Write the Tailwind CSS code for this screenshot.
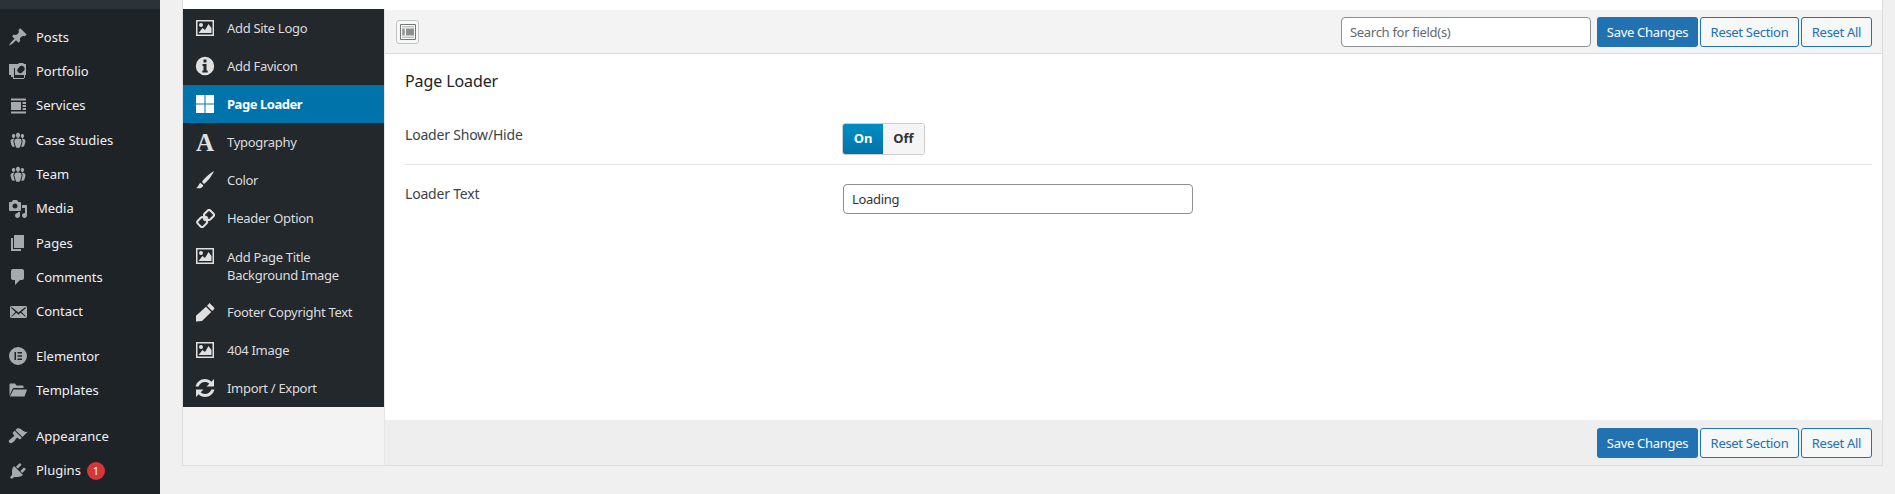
<!DOCTYPE html>
<html lang="en">
<head>
<meta charset="utf-8">
<title>Page Loader</title>
<script src="https://cdn.jsdelivr.net/npm/@tailwindcss/browser@4"></script>
</head>
<body class="bg-[#f0f0f1] font-['Noto_Sans','Open_Sans',sans-serif] text-[13px] tracking-[-0.3px]">
<div class="flex h-[494px] w-[1895px] overflow-hidden">
  <aside class="w-[160px] shrink-0 bg-[#1d2327] tracking-normal text-[#f0f0f1]">
    <div class="h-[9px] bg-[#2c3338]"></div>
    <ul class="pt-[11px] [&>li>span:nth-child(2)]:pt-[1px]">
      <li class="flex h-[34.3px] items-center"><span class="flex w-[36px] justify-center pl-[0px]"><svg class="size-5 fill-[#a7aaad]" viewBox="0 0 20 20"><path d="M10.44 3.02l1.82-1.82 6.36 6.35-1.83 1.82c-1.05-.68-2.48-.57-3.41.36l-.75.75c-.92.93-1.04 2.35-.35 3.41l-1.83 1.82-2.41-2.41-2.8 2.79c-.42.42-3.38 2.71-3.8 2.29s1.86-3.39 2.28-3.81l2.79-2.79L4.1 9.36l1.83-1.82c1.05.69 2.48.57 3.4-.36l.75-.75c.93-.92 1.05-2.35.36-3.41z"/></svg></span><span>Posts</span></li>
      <li class="flex h-[34.3px] items-center"><span class="flex w-[36px] justify-center"><svg class="size-5 fill-[#a7aaad]" viewBox="0 0 20 20"><path fill-rule="evenodd" d="M1 3h9l1-1h4l1 1h2v11h-2v4H5v-2H3v-2H1zM6 7v10h11v-3H7V7zM11 6.500a3 3 0 1 0 4 4a3 3 0 1 0-4-4z"/></svg></span><span>Portfolio</span></li>
      <li class="flex h-[34.3px] items-center"><span class="flex w-[36px] justify-center"><svg class="size-5 fill-[#a7aaad]" viewBox="0 0 20 20"><path d="M3 2.500h15v2H3zM3 6h10v8H3zM14.500 6H18v2h-3.500zM14.500 9H18v2h-3.500zM14.500 12H18v2h-3.500zM3 15.500h15v2H3z"/></svg></span><span>Services</span></li>
      <li class="flex h-[34.3px] items-center"><span class="flex w-[36px] justify-center"><svg class="size-5 fill-[#a7aaad]" viewBox="0 0 20 20"><path d="M8.030 4.460c-.29 1.280.55 3.460 1.970 3.460 1.410 0 2.250-2.180 1.960-3.460-.22-.98-1.080-1.630-1.960-1.630-.89 0-1.740.65-1.970 1.630zm-4.130.9c-.25 1.080.47 2.930 1.670 2.930s1.920-1.850 1.670-2.930c-.19-.83-.92-1.390-1.670-1.390s-1.480.56-1.670 1.390zm8.860 0c-.25 1.080.47 2.930 1.660 2.930 1.200 0 1.920-1.850 1.670-2.930-.19-.83-.92-1.390-1.670-1.390-.74 0-1.470.56-1.660 1.390zm-.59 11.430l1.250-4.300C14.200 10 12.710 8.470 10 8.470c-2.720 0-4.210 1.530-3.440 4.020l1.260 4.300C8.050 17.510 9 18 10 18c.98 0 1.940-.49 2.170-1.210zm-6.100-7.630c-.49.67-.96 1.830-.42 3.590l1.120 3.790c-.34.2-.77.31-1.200.31-.85 0-1.650-.41-1.850-1.030l-1.070-3.650c-.65-2.110.61-3.400 2.920-3.400.27 0 .54.02.79.06-.1.1-.2.22-.29.33zm8.350-.39c2.310 0 3.580 1.290 2.920 3.400l-1.070 3.650c-.2.62-1 1.030-1.850 1.030-.43 0-.86-.11-1.200-.31l1.110-3.770c.55-1.780.08-2.940-.42-3.610-.08-.11-.18-.23-.28-.33.25-.04.51-.06.79-.06z"/></svg></span><span>Case Studies</span></li>
      <li class="flex h-[34.3px] items-center"><span class="flex w-[36px] justify-center"><svg class="size-5 fill-[#a7aaad]" viewBox="0 0 20 20"><path d="M8.030 4.460c-.29 1.280.55 3.460 1.970 3.460 1.410 0 2.250-2.180 1.960-3.460-.22-.98-1.080-1.630-1.960-1.630-.89 0-1.740.65-1.970 1.630zm-4.130.9c-.25 1.080.47 2.930 1.670 2.930s1.920-1.850 1.670-2.930c-.19-.83-.92-1.390-1.670-1.390s-1.480.56-1.670 1.390zm8.860 0c-.25 1.080.47 2.930 1.660 2.930 1.200 0 1.920-1.850 1.670-2.930-.19-.83-.92-1.390-1.670-1.390-.74 0-1.470.56-1.660 1.390zm-.59 11.430l1.250-4.300C14.200 10 12.710 8.470 10 8.470c-2.720 0-4.210 1.530-3.440 4.020l1.260 4.300C8.050 17.510 9 18 10 18c.98 0 1.940-.49 2.170-1.210zm-6.100-7.630c-.49.67-.96 1.830-.42 3.590l1.120 3.790c-.34.2-.77.31-1.200.31-.85 0-1.650-.41-1.850-1.030l-1.070-3.650c-.65-2.110.61-3.400 2.920-3.400.27 0 .54.02.79.06-.1.1-.2.22-.29.33zm8.350-.39c2.310 0 3.580 1.290 2.920 3.400l-1.070 3.650c-.2.62-1 1.030-1.850 1.030-.43 0-.86-.11-1.200-.31l1.110-3.770c.55-1.780.08-2.940-.42-3.610-.08-.11-.18-.23-.28-.33.25-.04.51-.06.79-.06z"/></svg></span><span>Team</span></li>
      <li class="flex h-[34.3px] items-center"><span class="flex w-[36px] justify-center"><svg class="size-5 fill-[#a7aaad]" viewBox="0 0 20 20"><path d="M13 11V4c0-.55-.45-1-1-1h-1.670L9 1H5L3.670 3H2c-.55 0-1 .45-1 1v7c0 .55.45 1 1 1h10c.55 0 1-.45 1-1zM7 4.500c1.380 0 2.500 1.120 2.500 2.500S8.380 9.500 7 9.500 4.500 8.380 4.500 7 5.620 4.500 7 4.500zM14 6h5v10.500c0 1.380-1.120 2.500-2.500 2.500S14 17.880 14 16.500s1.120-2.500 2.500-2.500c.17 0 .34.02.5.05V9h-3V6zm-4 8.050V13h2v3.500c0 1.380-1.120 2.500-2.500 2.500S7 17.880 7 16.500 8.120 14 9.500 14c.17 0 .34.02.5.05z"/></svg></span><span>Media</span></li>
      <li class="flex h-[34.3px] items-center"><span class="flex w-[36px] justify-center"><svg class="size-5 fill-[#a7aaad]" viewBox="0 0 20 20"><path d="M6 15V2h10v13H6zm-1 1h8v2H3V5h2v11z"/></svg></span><span>Pages</span></li>
      <li class="flex h-[34.3px] items-center"><span class="flex w-[36px] justify-center"><svg class="size-5 fill-[#a7aaad]" viewBox="0 0 20 20"><path d="M5 2h9c1.100 0 2 .9 2 2v7c0 1.100-.9 2-2 2h-2l-5 5v-5H5c-1.100 0-2-.9-2-2V4c0-1.100.9-2 2-2z"/></svg></span><span>Comments</span></li>
      <li class="flex h-[34.3px] items-center"><span class="flex w-[36px] justify-center"><svg class="size-5 fill-[#a7aaad]" viewBox="0 0 20 20"><path d="M19 14.500v-9c0-.83-.67-1.500-1.500-1.500H3.490c-.83 0-1.500.67-1.500 1.500v9c0 .83.67 1.500 1.500 1.500H17.500c.83 0 1.500-.67 1.500-1.500zm-1.310-9.110c.33.33.15.67-.03.84L13.600 9.950l3.900 4.060c.12.14.2.36.06.51-.13.16-.43.15-.56.05l-4.370-3.730-2.140 1.950-2.130-1.950-4.370 3.730c-.13.1-.43.11-.56-.05-.14-.15-.06-.37.06-.51l3.900-4.060-4.060-3.720c-.18-.17-.36-.51-.03-.84s.67-.17.95.07l6.240 5.040 6.250-5.040c.28-.24.62-.4.95-.07z"/></svg></span><span>Contact</span></li>
      <li class="mt-[10px] flex h-[34.3px] items-center"><span class="flex w-[36px] justify-center"><svg class="size-5 fill-[#a7aaad]" viewBox="0 0 20 20"><path fill-rule="evenodd" d="M10 1a9 9 0 1 0 0 18a9 9 0 1 0 0-18zM6.500 6h1.500v8H6.500zM9.500 6h4.500v1.500H9.500zM9.500 9.250h4.500v1.500H9.500zM9.500 12.500h4.500V14H9.500z"/></svg></span><span>Elementor</span></li>
      <li class="flex h-[34.3px] items-center"><span class="flex w-[36px] justify-center"><svg class="size-5 fill-[#a7aaad]" viewBox="0 0 20 20"><path d="M1.500 15.500V4.500c0-.5.4-1 1-1h4.500l1.500 2h6c.5 0 1 .4 1 1V8H6c-.7 0-1.200.4-1.500 1zM5.500 9.500h13.500l-2.500 7H1.800z"/></svg></span><span>Templates</span></li>
      <li class="mt-[12px] flex h-[34.3px] items-center"><span class="flex w-[36px] justify-center"><svg class="size-5 fill-[#a7aaad]" viewBox="0 0 20 20"><path d="M14.480 11.060L7.410 3.990l1.500-1.500c.5-.56 2.300-.47 3.510.32 1.210.8 1.430 1.280 2.910 2.100 1.180.64 2.450 1.260 4.450.85zm-.71.71L6.700 4.700 4.930 6.470c-.39.39-.39 1.020 0 1.410l1.060 1.060c.39.39.39 1.030 0 1.420-.6.6-1.430 1.110-2.210 1.690-.35.26-.7.53-1.010.84C1.430 13.230 0 15.190 1.410 16.600c1.400 1.400 3.370-.02 4.720-1.340.32-.31.59-.66.85-1.010.58-.79 1.090-1.610 1.690-2.210.39-.39 1.020-.39 1.410 0l1.060 1.060c.39.39 1.020.39 1.410 0z"/></svg></span><span>Appearance</span></li>
      <li class="flex h-[34.3px] items-center"><span class="flex w-[36px] justify-center"><svg class="size-5 fill-[#a7aaad]" viewBox="0 0 20 20"><path d="M13.110 4.360L9.870 7.600 8 5.730l3.240-3.240c.35-.34 1.050-.2 1.560.32.52.51.66 1.210.31 1.550zm-8 1.770l.91-1.120 9.010 9.010-1.190.84c-.71.71-2.630 1.160-3.820 1.160H6.140L4.900 17.260c-.59.59-1.540.59-2.120 0-.59-.58-.59-1.530 0-2.120l1.240-1.240v-3.880c0-1.130.4-3.190 1.090-3.890zm7.260 3.970l3.240-3.240c.34-.35 1.040-.21 1.550.31.52.51.66 1.210.31 1.550l-3.240 3.250z"/></svg></span><span>Plugins</span><span class="ml-[6px] flex size-[18px] items-center justify-center rounded-full bg-[#d63638] text-[11px] leading-none text-white">1</span></li>
    </ul>
  </aside>

  <div class="ml-[22px] flex h-[466px] w-[1701px] shrink-0 flex-col border-x border-b border-[#dcdcde] bg-white">
    <div class="h-[9px] shrink-0 bg-white"></div>
    <div class="flex min-h-0 flex-1">
      <nav class="flex w-[202px] shrink-0 flex-col border-r border-[#e5e5e5] bg-[#f3f3f3]">
        <ul class="bg-[#23282d] text-[#dddddd] [&>li>span:nth-child(2)]:pt-[1px]">
          <li class="flex h-[38px] items-center"><span class="flex w-[44px] justify-center"><svg class="size-[20px] fill-[#e0e0e0]" viewBox="0 0 20 20"><path fill-rule="evenodd" d="M1 2h18v16H1zM2.500 3.500v13h15v-13zM3.500 15l4-5 2.500 2 3.500-6 3 4v5zM6 5a2 2 0 1 0 0 4a2 2 0 1 0 0-4z"/></svg></span><span>Add Site Logo</span></li>
          <li class="flex h-[38px] items-center"><span class="flex w-[44px] justify-center"><svg class="size-[20px] fill-[#e0e0e0]" viewBox="0 0 20 20"><path fill-rule="evenodd" d="M10 .8a9.200 9.200 0 1 0 0 18.400a9.200 9.200 0 1 0 0-18.400zM8.500 3.500h3v3h-3zM7.500 8h4v6.500h1.200v2H7.300v-2h1.200v-4.500h-1z"/></svg></span><span>Add Favicon</span></li>
          <li class="flex h-[38px] items-center bg-[#0073aa] font-bold tracking-[-0.45px] text-white"><span class="flex w-[44px] justify-center"><svg class="size-[20px] fill-white" viewBox="0 0 20 20"><path d="M1 1h8.500v8.500H1zM10.500 1H19v8.500h-8.500zM1 10.500h8.500V19H1zM10.500 10.500H19V19h-8.500z"/></svg></span><span>Page Loader</span></li>
          <li class="flex h-[38px] items-center"><span class="flex w-[44px] justify-center font-['Liberation_Serif',serif] text-[25px] leading-none font-bold text-[#e0e0e0]">A</span><span>Typography</span></li>
          <li class="flex h-[38px] items-center"><span class="flex w-[44px] justify-center"><svg class="size-[20px] fill-[#e0e0e0]" viewBox="0 0 20 20"><path d="M19 1C14 4 8.500 9 7 12l2 2c3-2 8-8 10-13zM5.500 13C3.500 13.500 4 16.500 1 18c4 1 7-.5 7.300-2.800z"/></svg></span><span>Color</span></li>
          <li class="flex h-[38px] items-center"><span class="flex w-[44px] justify-center"><svg class="size-[19px] fill-none stroke-[#e0e0e0] stroke-[2.200]" viewBox="0 0 20 20"><path d="M9.200 4.800l3-3a2.200 2.200 0 0 1 3.100 0l2.900 2.900a2.200 2.200 0 0 1 0 3.100l-3 3a2.200 2.200 0 0 1-3.100 0l-2.900-2.900a2.200 2.200 0 0 1 0-3.100zM2 12.300l3-3a2.200 2.200 0 0 1 3.100 0l2.900 2.900a2.200 2.200 0 0 1 0 3.100l-3 3a2.200 2.200 0 0 1-3.100 0L2 15.400a2.200 2.200 0 0 1 0-3.100zM8 12l4-4"/></svg></span><span>Header Option</span></li>
          <li class="flex h-[56px] items-center"><span class="flex w-[44px] -translate-y-[9px] justify-center"><svg class="size-[20px] fill-[#e0e0e0]" viewBox="0 0 20 20"><path fill-rule="evenodd" d="M1 2h18v16H1zM2.500 3.500v13h15v-13zM3.500 15l4-5 2.500 2 3.500-6 3 4v5zM6 5a2 2 0 1 0 0 4a2 2 0 1 0 0-4z"/></svg></span><span class="leading-[18px]">Add Page Title<br>Background Image</span></li>
          <li class="flex h-[38px] items-center"><span class="flex w-[44px] justify-center"><svg class="size-[20px] fill-[#e0e0e0]" viewBox="0 0 20 20"><path d="M14.500 1l4.500 4.500c.5.500.5 1.200 0 1.700l-1.800 1.800-5.200-5.200L13.800 2c.2-.5.4-1 .7-1zM11 4.800l5.200 5.200L7 19 1 19.500 1 13.800z"/></svg></span><span>Footer Copyright Text</span></li>
          <li class="flex h-[38px] items-center"><span class="flex w-[44px] justify-center"><svg class="size-[20px] fill-[#e0e0e0]" viewBox="0 0 20 20"><path fill-rule="evenodd" d="M1 2h18v16H1zM2.500 3.500v13h15v-13zM3.500 15l4-5 2.500 2 3.500-6 3 4v5zM6 5a2 2 0 1 0 0 4a2 2 0 1 0 0-4z"/></svg></span><span>404 Image</span></li>
          <li class="flex h-[38px] items-center"><span class="flex w-[44px] justify-center"><svg class="size-[20px] fill-[#e0e0e0]" viewBox="0 0 20 20"><path d="M10 1c2.500 0 4.700 1 6.300 2.700L19 1v7.500h-7.500l2.800-2.800C13.200 4.600 11.700 4 10 4 7 4 4.500 5.900 3.600 8.500H.6C1.500 4.200 5.300 1 10 1zM1 11.500h7.500l-2.800 2.800C6.800 15.400 8.300 16 10 16c3 0 5.500-1.900 6.400-4.500h3C18.500 15.800 14.700 19 10 19c-2.500 0-4.700-1-6.300-2.700L1 19z"/></svg></span><span>Import / Export</span></li>
        </ul>
      </nav>

      <main class="flex min-w-0 flex-1 flex-col pt-[1px]">
        <header class="flex h-[44px] shrink-0 items-center justify-between border-b border-[#dcdcde] bg-[#f3f3f3] pr-[10px] pl-[11px]">
          <button class="flex h-[24px] w-[23px] items-center justify-center rounded-[3px] border border-[#c3c4c7] bg-[#f6f7f7]">
            <svg class="size-[16px]" viewBox="0 0 16 16"><path class="fill-none stroke-[#777]" d="M.5.5h15v15H.5z"/><path class="fill-[#c4c4c4]" d="M2 2h12v1.500H2zM2 12.500h12V14H2z"/><path class="fill-[#a0a0a0]" d="M2 4.500h3v7H2z"/><path class="fill-[#8f8f8f]" d="M6 4.500h8v7H6z"/></svg>
          </button>
          <div class="flex items-center">
            <input class="mr-[6px] h-[30px] w-[250px] rounded-[4px] border border-[#8c8f94] bg-white px-[8px] text-[#50575e] placeholder:text-[#646970]" placeholder="Search for field(s)">
            <button class="h-[30px] w-[101px] rounded-[3px] bg-[#2271b1] pt-[2px] text-white">Save Changes</button>
            <button class="ml-[2px] h-[30px] w-[99px] rounded-[3px] border border-[#2271b1] bg-[#f6f7f7] pt-[2px] text-[#2271b1]">Reset Section</button>
            <button class="ml-[2px] h-[30px] w-[71px] rounded-[3px] border border-[#2271b1] bg-[#f6f7f7] pt-[2px] text-[#2271b1]">Reset All</button>
          </div>
        </header>
        <section class="flex-1 pr-[10px] pl-[20px]">
          <h2 class="mt-[16px] text-[16px] leading-[22px] font-normal tracking-[-0.1px] text-[#1d2327]">Page Loader</h2>
          <div class="mt-[20px] flex h-[53px] border-b border-[#e5e5e5] pt-[14px]">
            <div class="w-[437px] text-[14px] leading-[18px] font-normal tracking-[-0.2px] text-[#3c434a]">Loader Show/Hide</div>
            <div class="-mt-[3px] flex h-[32px] w-[83px] overflow-hidden rounded-[3px] border border-[#cccccc] font-bold tracking-normal">
              <span class="flex w-[40px] items-center justify-center bg-gradient-to-b from-[#008ec2] to-[#0073aa] text-white">On</span>
              <span class="flex flex-1 items-center justify-center bg-[#f5f5f5] text-[#333]">Off</span>
            </div>
          </div>
          <div class="flex pt-[19px]">
            <div class="w-[438px] pt-[1px] text-[14px] leading-[18px] font-normal tracking-[-0.2px] text-[#3c434a]">Loader Text</div>
            <input class="h-[30px] w-[350px] rounded-[4px] border border-[#8c8f94] bg-white px-[8px] text-[#2c3338]" value="Loading">
          </div>
        </section>
        <footer class="flex h-[45px] shrink-0 items-center justify-end bg-[#eeeeee] pr-[10px]">
          <button class="h-[30px] w-[101px] rounded-[3px] bg-[#2271b1] pt-[2px] text-white">Save Changes</button>
          <button class="ml-[2px] h-[30px] w-[99px] rounded-[3px] border border-[#2271b1] bg-[#f6f7f7] pt-[2px] text-[#2271b1]">Reset Section</button>
          <button class="ml-[2px] h-[30px] w-[71px] rounded-[3px] border border-[#2271b1] bg-[#f6f7f7] pt-[2px] text-[#2271b1]">Reset All</button>
        </footer>
      </main>
    </div>
  </div>
</div>
</body>
</html>
